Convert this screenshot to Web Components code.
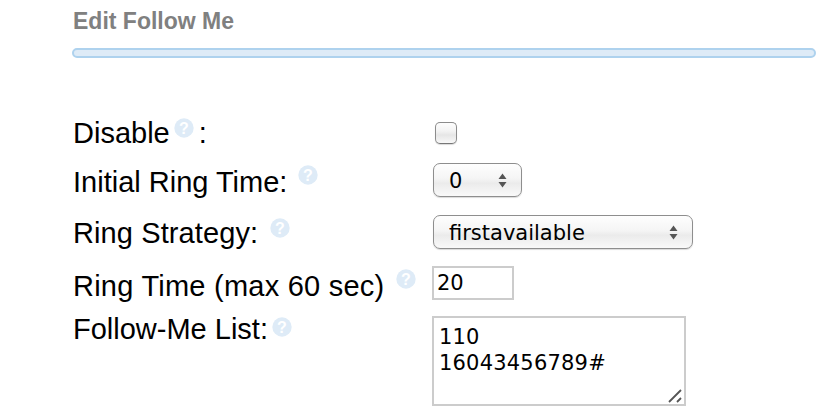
<!DOCTYPE html>
<html>
<head>
<meta charset="utf-8">
<style>
  html, body { margin: 0; padding: 0; background: #fff; }
  body { width: 824px; height: 416px; overflow: hidden; font-family: "Liberation Sans", Arial, sans-serif; }
  #page { display: block; padding: 0 8px 0 72px; }
  .lbl { display: flex; align-items: flex-start; }
</style>
</head>
<body>
<template id="row-tpl">
  <style>
    :host { display: grid; grid-template-columns: 360px 1fr; align-items: start; }
    .label { display: flex; align-items: flex-start; margin-top: var(--label-top, 0); padding-left: 1px; font-size: 29px; line-height: 34px; color: #000; white-space: nowrap; }
    .control { display: block; }
  </style>
  <div class="label"><slot name="label"></slot></div>
  <div class="control"><slot></slot></div>
</template>

<script>
function shadowFrom(el, html) {
  el.attachShadow({ mode: 'open' }).innerHTML = html;
}

class FmHeading extends HTMLElement {
  constructor() {
    super();
    shadowFrom(this, `
      <style>
        :host { display: block; padding: 8px 0 0 1px; height: 30px; font-size: 23px; line-height: 26px; font-weight: bold; color: #808080; }
      </style>
      <slot></slot>`);
  }
}

class FmBar extends HTMLElement {
  constructor() {
    super();
    shadowFrom(this, `
      <style>
        :host { display: block; box-sizing: border-box; margin-top: 10px; height: 10px; border: 2px solid #aed2ee; border-radius: 5px; background: #deebf7; }
      </style>`);
  }
}

class FmRow extends HTMLElement {
  constructor() {
    super();
    this.attachShadow({ mode: 'open' }).appendChild(document.getElementById('row-tpl').content.cloneNode(true));
  }
}

class FmHelp extends HTMLElement {
  constructor() {
    super();
    shadowFrom(this, `
      <style>
        :host { display: block; flex: none; width: 20px; height: 20px; margin: var(--help-margin, 0); letter-spacing: 0; }
        svg { display: block; }
        text { font: bold 16px "Liberation Sans", Arial, sans-serif; fill: #fff; }
      </style>
      <svg width="20" height="20" viewBox="0 0 20 20">
        <circle cx="10" cy="10" r="9.7" fill="#deebf7"/>
        <text x="10" y="15.6" text-anchor="middle">?</text>
      </svg>`);
  }
}

class FmCheckbox extends HTMLElement {
  constructor() {
    super();
    shadowFrom(this, `
      <style>
        :host { display: block; box-sizing: border-box; width: 22px; height: 22px; margin-left: 3px; border: 1px solid #8c8c8c; border-bottom-color: #777; border-radius: 5px;
          background: linear-gradient(#fdfdfd 0%, #f3f3f3 40%, #e6e6e6 60%, #f8f8f8 100%); box-shadow: 0 1px 1px rgba(0,0,0,.15); }
      </style>`);
  }
}

class FmSelect extends HTMLElement {
  constructor() {
    super();
    shadowFrom(this, `
      <style>
        :host { display: flex; box-sizing: border-box; align-items: center; justify-content: space-between; width: var(--w); height: 34px; margin-left: 1px; padding: 1px 14px 0 15px;
          border: 1px solid #8e8e8e; border-radius: 7px; background: linear-gradient(#fefefe 0%, #f5f5f5 45%, #ebebeb 60%, #f9f9f9 100%); box-shadow: 0 1px 1px rgba(0,0,0,.15);
          font: 21px "DejaVu Sans", sans-serif; color: #000; }
        svg { display: block; flex: none; }
      </style>
      <span><slot></slot></span>
      <svg width="9" height="15" viewBox="0 0 9 15"><path d="M4.5 0.5 L8.5 6 H0.5 Z M0.5 9 H8.5 L4.5 14.5 Z" fill="#555"/></svg>`);
  }
}

class FmInput extends HTMLElement {
  constructor() {
    super();
    shadowFrom(this, `
      <style>
        :host { display: block; box-sizing: border-box; width: 82px; height: 34px; padding: 0 0 0 3px; border: 2px solid #ccc; background: #fff;
          font: 21px/30px "DejaVu Sans", sans-serif; color: #000; }
      </style>
      <slot></slot>`);
  }
}

class FmTextarea extends HTMLElement {
  constructor() {
    super();
    shadowFrom(this, `
      <style>
        :host { display: block; position: relative; box-sizing: border-box; width: 254px; height: 90px; padding: 6px 0 0 5px; border: 2px solid #ccc; background: #fff;
          font: 21px/26px "DejaVu Sans", sans-serif; letter-spacing: 0.2px; color: #000; }
        div { white-space: pre; }
        svg { position: absolute; right: 1px; bottom: 1px; }
      </style>
      <div><slot></slot></div>
      <svg width="15" height="15" viewBox="0 0 15 15"><path d="M1 14 L13 2 M9 14 L13 10" stroke="#555" stroke-width="1.8" fill="none"/></svg>`);
  }
}

customElements.define('fm-heading', FmHeading);
customElements.define('fm-bar', FmBar);
customElements.define('fm-row', FmRow);
customElements.define('fm-help', FmHelp);
customElements.define('fm-checkbox', FmCheckbox);
customElements.define('fm-select', FmSelect);
customElements.define('fm-input', FmInput);
customElements.define('fm-textarea', FmTextarea);
</script>

<div id="page">
  <fm-heading>Edit Follow Me</fm-heading>
  <fm-bar></fm-bar>

  <fm-row style="margin-top:64px;height:41px;--label-top:-6px">
    <span class="lbl" slot="label">Disable<fm-help style="--help-margin:2px 5px 0 4px"></fm-help>:</span>
    <fm-checkbox></fm-checkbox>
  </fm-row>
  <fm-row style="height:52px;--label-top:2px">
    <span class="lbl" slot="label">Initial Ring Time:<fm-help style="--help-margin:0 0 0 11px"></fm-help></span>
    <fm-select style="--w:89px">0</fm-select>
  </fm-row>
  <fm-row style="height:51px;--label-top:1px">
    <span class="lbl" slot="label" style="letter-spacing:.1px">Ring Strategy:<fm-help style="--help-margin:2px 0 0 12px"></fm-help></span>
    <fm-select style="--w:260px">firstavailable</fm-select>
  </fm-row>
  <fm-row style="height:50px;--label-top:3px">
    <span class="lbl" slot="label" style="letter-spacing:.24px">Ring Time (max 60 sec)<fm-help style="--help-margin:0 0 0 12px"></fm-help></span>
    <fm-input>20</fm-input>
  </fm-row>
  <fm-row style="--label-top:-4px">
    <span class="lbl" slot="label">Follow-Me List:<fm-help style="--help-margin:5px 0 0 4px"></fm-help></span>
    <fm-textarea>110
16043456789#</fm-textarea>
  </fm-row>
</div>
</body>
</html>
